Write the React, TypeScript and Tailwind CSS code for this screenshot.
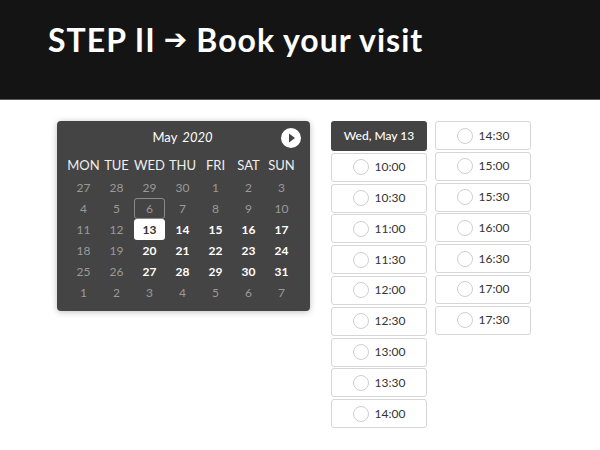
const days = ["MON", "TUE", "WED", "THU", "FRI", "SAT", "SUN"];

type Day = { n: number; kind: "muted" | "open" | "today" | "selected" };

const weeks: Day[][] = [
  [27, 28, 29, 30, 1, 2, 3].map((n) => ({ n, kind: "muted" as const })),
  [4, 5, 6, 7, 8, 9, 10].map((n) => ({ n, kind: n === 6 ? ("today" as const) : ("muted" as const) })),
  [11, 12, 13, 14, 15, 16, 17].map((n) => ({
    n,
    kind: n < 13 ? ("muted" as const) : n === 13 ? ("selected" as const) : ("open" as const),
  })),
  [18, 19, 20, 21, 22, 23, 24].map((n) => ({ n, kind: n < 20 ? ("muted" as const) : ("open" as const) })),
  [25, 26, 27, 28, 29, 30, 31].map((n) => ({ n, kind: n < 27 ? ("muted" as const) : ("open" as const) })),
  [1, 2, 3, 4, 5, 6, 7].map((n) => ({ n, kind: "muted" as const })),
];

const colOne = ["10:00", "10:30", "11:00", "11:30", "12:00", "12:30", "13:00", "13:30", "14:00"];
const colTwo = ["14:30", "15:00", "15:30", "16:00", "16:30", "17:00", "17:30"];

function Slot({ time }: { time: string }) {
  return (
    <div className="flex h-[29px] items-center justify-center gap-[6px] rounded-[3px] border border-[#d6d6d6] bg-white">
      <span className="h-[16px] w-[16px] rounded-full border border-[#cfcfcf]" />
      <span className="text-[12px] text-[#333]">{time}</span>
    </div>
  );
}

export default function App() {
  return (
    <div className="h-[450px] w-[600px] bg-white font-['Lato',_'Open_Sans',_sans-serif]">
      {/* Header */}
      <div className="flex h-[100px] items-start border-b border-[#5a5a5a] bg-[#141414] pl-[48px] pt-[16px]">
        <h1 className="flex items-center text-[32px] font-bold tracking-[1px] text-white">
          STEP II
          <span className="mx-[8px] font-['DejaVu_Sans',_sans-serif] text-[28px] leading-none">➔</span>
          Book your visit
        </h1>
      </div>

      <div className="flex items-start pl-[57px] pt-[21px]">
        {/* Calendar */}
        <div className="w-[253px] rounded-[4px] bg-[#444] pb-[8px] pl-[10px] pr-[12px] shadow-[0_1px_6px_rgba(0,0,0,0.25)]">
          <div className="relative flex h-[33px] items-center justify-center text-[13px] text-white">
            <span>May</span>
            <span className="ml-[5px] italic">2020</span>
            <button className="absolute right-[-3px] top-[7px] flex h-[20px] w-[20px] items-center justify-center rounded-full bg-white">
              <svg width="8" height="10" viewBox="0 0 8 10" className="ml-[2px]">
                <path d="M1 0.5 L7 5 L1 9.5 Z" fill="#444" />
              </svg>
            </button>
          </div>
          <div className="grid h-[23px] grid-cols-7 items-center text-center text-[13px] text-[#eee]">
            {days.map((d) => (
              <span key={d}>{d}</span>
            ))}
          </div>
          {weeks.map((w, i) => (
            <div key={i} className="grid h-[21px] grid-cols-7 text-center text-[12px]">
              {w.map((d) => (
                <div key={d.n} className="flex items-center justify-center px-[1px]">
                  {d.kind === "muted" && <span className="text-[#9a9a9a]">{d.n}</span>}
                  {d.kind === "open" && <span className="font-bold text-white">{d.n}</span>}
                  {d.kind === "today" && (
                    <span className="flex h-[21px] w-full items-center justify-center rounded-[3px] border border-[#8a8a8a] text-[#9a9a9a]">
                      {d.n}
                    </span>
                  )}
                  {d.kind === "selected" && (
                    <span className="flex h-[21px] w-full items-center justify-center rounded-[3px] bg-white font-bold text-[#333]">
                      {d.n}
                    </span>
                  )}
                </div>
              ))}
            </div>
          ))}
        </div>

        {/* Time slots */}
        <div className="ml-[21px] flex gap-[8px]">
          <div className="flex w-[96px] flex-col gap-[1.8px]">
            <div className="flex h-[30px] items-center justify-center rounded-[3px] bg-[#444] text-[12px] font-medium text-white">
              Wed, May 13
            </div>
            {colOne.map((t) => (
              <Slot key={t} time={t} />
            ))}
          </div>
          <div className="flex w-[96px] flex-col gap-[1.8px]">
            {colTwo.map((t) => (
              <Slot key={t} time={t} />
            ))}
          </div>
        </div>
      </div>
    </div>
  );
}
